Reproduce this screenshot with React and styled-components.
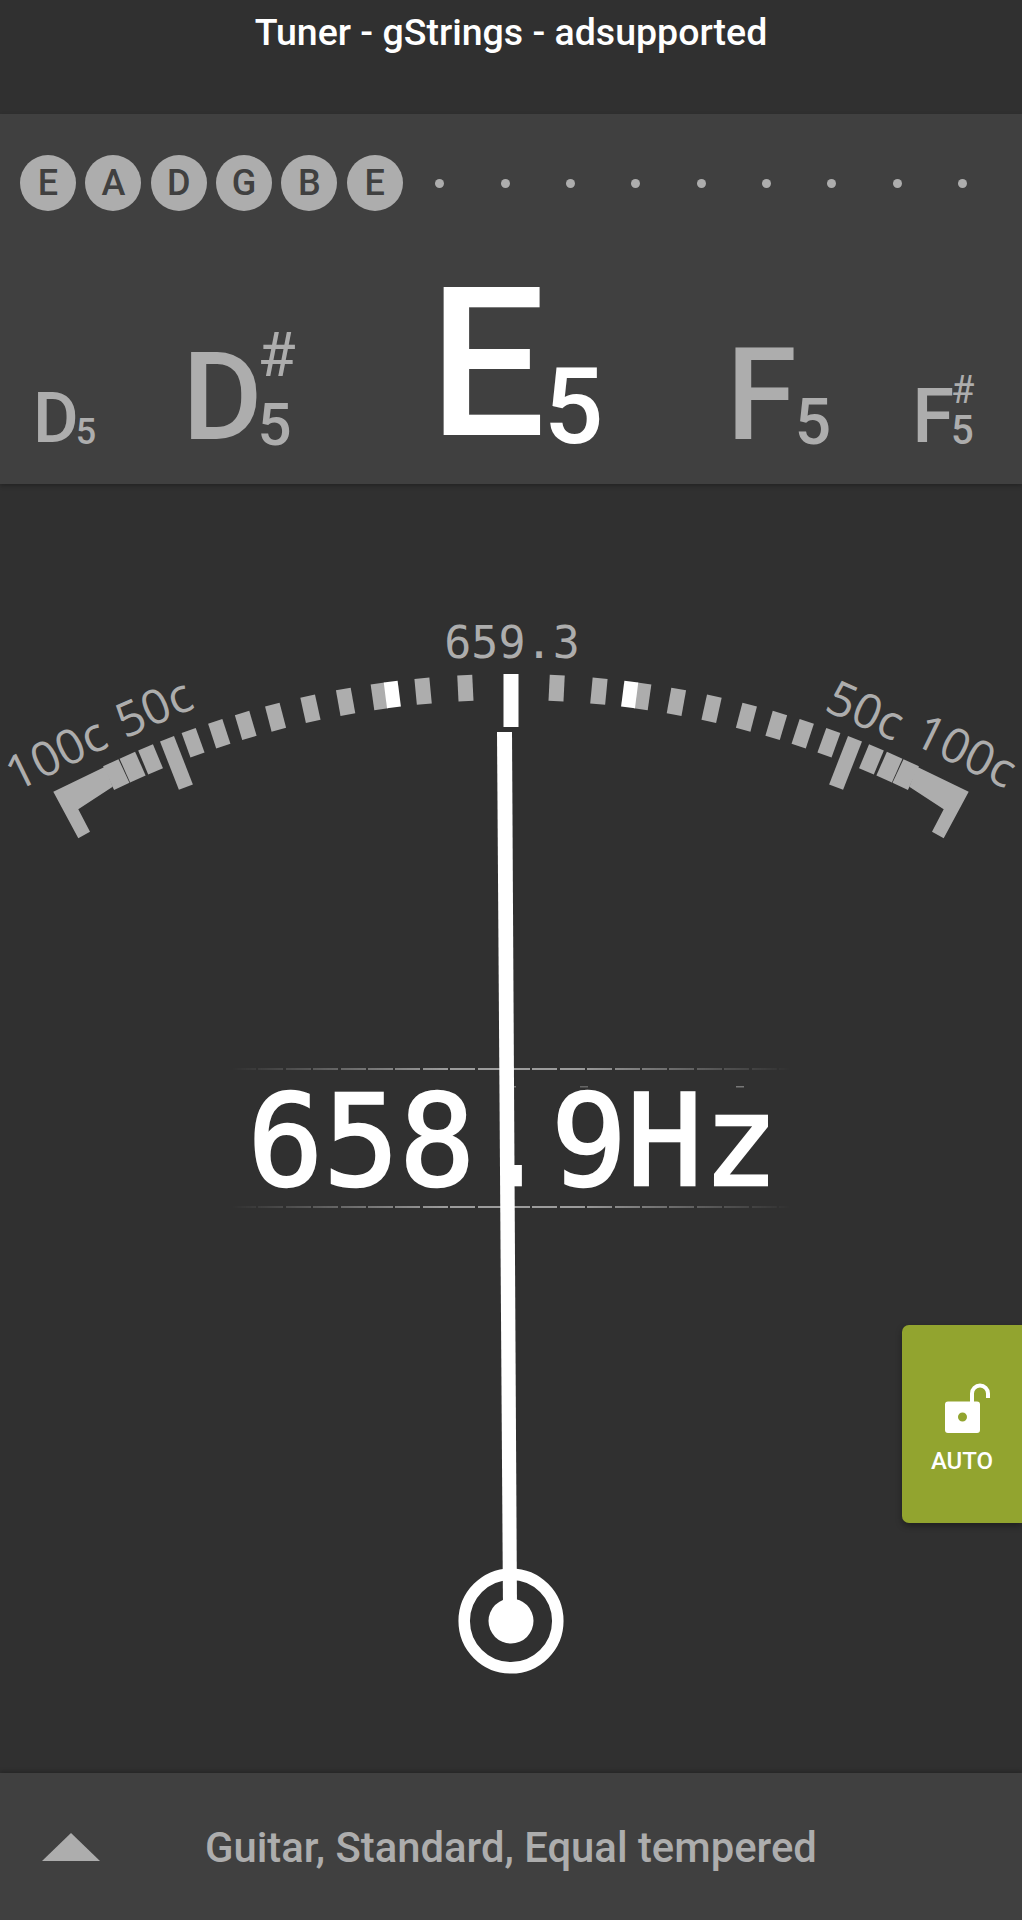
import React from "react";
import styled, { createGlobalStyle } from "styled-components";

const GlobalStyle = createGlobalStyle`
  html, body {
    margin: 0;
    padding: 0;
    background: #303030;
  }
`;

const HUB_X = 511;
const HUB_Y = 1621;
const GREY = "#adadad";

const STRINGS = ["E", "A", "D", "G", "B", "E"];
const EMPTY_SLOTS = 9;

// small ticks: angle away from the centre line, in degrees
const TICKS = [
  { angle: 2.8 },
  { angle: 5.4 },
  { angle: 8.1, width: 14 },
  { angle: 7.3, width: 14, color: "#ffffff" },
  { angle: 10.2 },
  { angle: 12.4 },
  { angle: 14.6 },
  { angle: 16.5 },
  { angle: 18.2 },
  { angle: 19.9 },
  { angle: 21.3, long: true },
  { angle: 22.7, width: 16 },
  { angle: 23.9, width: 17 },
  { angle: 25, width: 17 },
];

const App = () => (
  <Screen>
    <GlobalStyle />
    <Header>Tuner - gStrings - adsupported</Header>

    <NotePanel>
      <StringRow>
        {STRINGS.map((name, i) => (
          <StringSlot key={i}>
            <StringBadge>{name}</StringBadge>
          </StringSlot>
        ))}
        {Array.from({ length: EMPTY_SLOTS }, (_, i) => (
          <StringSlot key={i}>
            <StringDot />
          </StringSlot>
        ))}
      </StringRow>

      <NoteRow>
        <Note letter="D" octave="5" size={70} octaveSize={36} left={0} lift={2.7} tuck={3} />
        <Note letter="D" octave="5" sharp size={123} octaveSize={60} sharpSize={62} sharpGap={25} left={83} lift={4.7} tuck={5} />
        <Note letter="E" octave="5" size={207} octaveSize={105} left={128} lift={7} tuck={2} active />
        <Note letter="F" octave="5" size={128} octaveSize={64} left={121} lift={4.6} tuck={2} />
        <Note letter="F" octave="5" sharp size={76} octaveSize={40} sharpSize={38} sharpGap={12.5} left={79} lift={2.6} tuck={3} />
      </NoteRow>
    </NotePanel>

    <Gauge>
      <Dial />
      <Reading>
        <RuleLine />
        <ReadingValue>658.9Hz</ReadingValue>
        <RuleLine />
      </Reading>
      <Needle />
      <AutoButton>
        <UnlockIcon />
        <AutoLabel>AUTO</AutoLabel>
      </AutoButton>
    </Gauge>

    <Footer>
      <FooterArrow />
      <FooterText>Guitar, Standard, Equal tempered</FooterText>
    </Footer>
  </Screen>
);

export default App;

function Note({ letter, octave, sharp, size, octaveSize, sharpSize, sharpGap, left, lift, tuck = 0, active }) {
  return (
    <NoteBox $left={left} $active={active}>
      <NoteLetter $size={size} $lift={lift}>{letter}</NoteLetter>
      <NoteMarks $tuck={tuck}>
        {sharp && <SharpMark $size={sharpSize} $gap={sharpGap}>#</SharpMark>}
        <OctaveMark $size={octaveSize}>{octave}</OctaveMark>
      </NoteMarks>
    </NoteBox>
  );
}

function Tick({ angle, width = 15, color = GREY, long }) {
  const outer = 947;
  const inner = long ? 895 : 921;
  return (
    <rect
      x={HUB_X - width / 2}
      y={HUB_Y - outer}
      width={width}
      height={outer - inner}
      fill={color}
      transform={`rotate(${-angle} ${HUB_X} ${HUB_Y})`}
    />
  );
}

function DialSide() {
  return (
    <g>
      {TICKS.map((tick, i) => (
        <Tick key={i} {...tick} />
      ))}
      <polygon points="53.3,791.7 105,766.7 112.7,786.7 78.3,809.3 90,831.7 78.3,838.3" fill={GREY} />
    </g>
  );
}

function Dial() {
  return (
    <DialSvg viewBox="0 600 1022 250">
      <DialSide />
      <g transform={`translate(${HUB_X * 2} 0) scale(-1 1)`}>
        <DialSide />
      </g>
      <rect x="503.5" y="674" width="15" height="53" fill="#ffffff" />
      <DialValue x="512" y="658" textAnchor="middle">659.3</DialValue>
      <DialCents transform="translate(16 792) rotate(-26)">100c</DialCents>
      <DialCents transform="translate(125 739) rotate(-24)">50c</DialCents>
      <DialCents transform="translate(823 710) rotate(24)">50c</DialCents>
      <DialCents transform="translate(911 743) rotate(26)">100c</DialCents>
    </DialSvg>
  );
}

function Needle() {
  return (
    <NeedleSvg viewBox="0 484 1022 1289">
      <rect x="508" y="1086" width="8" height="1.5" fill="#777777" />
      <rect x="580" y="1086" width="8" height="1.5" fill="#666666" />
      <rect x="736" y="1086" width="8" height="1.5" fill="#777777" />
      <polygon points="497,732 512,732 517,1610 503,1610" fill="#ffffff" />
      <circle cx={HUB_X} cy={HUB_Y} r="46.8" fill="none" stroke="#ffffff" strokeWidth="11.5" />
      <circle cx={HUB_X} cy={HUB_Y} r="22.5" fill="#ffffff" />
    </NeedleSvg>
  );
}

function UnlockIcon() {
  return (
    <svg width="46" height="52" viewBox="0 0 46 52">
      <path
        fillRule="evenodd"
        fill="#ffffff"
        d="M3 18.5h29a3 3 0 0 1 3 3v25.5a3 3 0 0 1-3 3H3a3 3 0 0 1-3-3V21.500a3 3 0 0 1 3-3zM17.500 29.500a4.500 4.500 0 1 0 0 9 4.500 4.500 0 0 0 0-9z"
      />
      <path d="M27 20V10.500a8 8 0 0 1 16 0V15" fill="none" stroke="#ffffff" strokeWidth="4" />
    </svg>
  );
}

const Screen = styled.div`
  width: 1022px;
  height: 1920px;
  display: flex;
  flex-direction: column;
  overflow: hidden;
  background: #303030;
  font-family: Roboto, "Liberation Sans", sans-serif;
`;

const Header = styled.div`
  height: 114px;
  box-sizing: border-box;
  padding-top: 11px;
  text-align: center;
  color: #ffffff;
  font-size: 37.5px;
  line-height: 42px;
  font-weight: 500;
`;

const NotePanel = styled.div`
  height: 370px;
  box-sizing: border-box;
  padding: 41px 0 38px;
  display: flex;
  flex-direction: column;
  justify-content: space-between;
  background: #404040;
  box-shadow: 0 2px 4px rgba(0, 0, 0, 0.25);
  position: relative;
`;

const StringRow = styled.div`
  display: flex;
  padding-left: 15.33px;
`;

const StringSlot = styled.div`
  width: 65.33px;
  height: 56px;
  display: flex;
  align-items: center;
  justify-content: center;
`;

const StringBadge = styled.div`
  width: 56px;
  height: 56px;
  border-radius: 50%;
  display: flex;
  align-items: center;
  justify-content: center;
  background: ${GREY};
  color: #404040;
  font-size: 36px;
  font-weight: 500;
`;

const StringDot = styled.div`
  width: 9px;
  height: 9px;
  border-radius: 50%;
  background: ${GREY};
`;

const NoteRow = styled.div`
  display: flex;
  align-items: flex-end;
  padding-left: 33px;
`;

const NoteBox = styled.div`
  display: flex;
  align-items: flex-end;
  margin-left: ${(p) => p.$left}px;
  color: ${(p) => (p.$active ? "#ffffff" : GREY)};
`;

const NoteLetter = styled.div`
  font-size: ${(p) => p.$size}px;
  font-weight: 500;
  line-height: 0.72;
  margin-bottom: ${(p) => p.$lift}px;
`;

const NoteMarks = styled.div`
  display: flex;
  flex-direction: column;
  margin-left: ${(p) => -p.$tuck}px;
  margin-right: ${(p) => p.$tuck}px;
`;

const SharpMark = styled.div`
  font-size: ${(p) => p.$size}px;
  line-height: 0.72;
  margin-bottom: ${(p) => p.$gap}px;
`;

const OctaveMark = styled.div`
  font-size: ${(p) => p.$size}px;
  font-weight: 500;
  line-height: 0.72;
`;

const Gauge = styled.div`
  flex: 1;
  position: relative;
  padding-top: 116px;
  display: flex;
  flex-direction: column;
  align-items: center;
`;

const DialSvg = styled.svg`
  display: block;
  width: 1022px;
  height: 250px;
  flex: none;
`;

const DialValue = styled.text`
  fill: ${GREY};
  font-family: "DejaVu Sans Mono", monospace;
  font-size: 45px;
`;

const DialCents = styled.text`
  fill: ${GREY};
  font-family: "Open Sans", sans-serif;
  font-size: 48px;
`;

const Reading = styled.div`
  margin-top: 218px;
  width: 560px;
  height: 140px;
  flex: none;
  display: flex;
  flex-direction: column;
  justify-content: space-between;
  align-items: center;
`;

const RuleLine = styled.div`
  width: 100%;
  height: 2px;
  flex: none;
  background: repeating-linear-gradient(90deg, #9c9c9c 0 25px, transparent 25px 27.4px);
  mask-image: linear-gradient(90deg, transparent, #000 38%, #000 62%, transparent);
`;

const ReadingValue = styled.div`
  color: #ffffff;
  font-family: "DejaVu Sans Mono", monospace;
  font-size: 126px;
  line-height: 126px;
  -webkit-text-stroke: 2.5px #ffffff;
  padding: 8px 0 0 4px;
  white-space: nowrap;
`;

const NeedleSvg = styled.svg`
  position: absolute;
  left: 0;
  top: 0;
  width: 1022px;
  height: 1289px;
  pointer-events: none;
`;

const AutoButton = styled.div`
  position: absolute;
  left: 902px;
  top: 841px;
  width: 120px;
  height: 198px;
  box-sizing: border-box;
  padding-top: 58px;
  display: flex;
  flex-direction: column;
  align-items: center;
  border-radius: 7px 0 0 7px;
  background: #92a42f;
  box-shadow: 0 3px 6px rgba(0, 0, 0, 0.35);

  svg {
    margin-left: 12px;
  }
`;

const AutoLabel = styled.div`
  margin-top: 12px;
  color: #ffffff;
  font-size: 24px;
  line-height: 28px;
  font-weight: 500;
`;

const Footer = styled.div`
  height: 147px;
  flex: none;
  display: flex;
  align-items: center;
  background: #404040;
  box-shadow: 0 -2px 4px rgba(0, 0, 0, 0.2);
  position: relative;
`;

const FooterArrow = styled.div`
  margin-left: 42px;
  width: 0;
  height: 0;
  border-left: 29px solid transparent;
  border-right: 29px solid transparent;
  border-bottom: 28px solid ${GREY};
`;

const FooterText = styled.div`
  margin-left: 105px;
  padding-top: 2px;
  color: ${GREY};
  font-size: 41.8px;
  font-weight: 500;
  white-space: nowrap;
`;
